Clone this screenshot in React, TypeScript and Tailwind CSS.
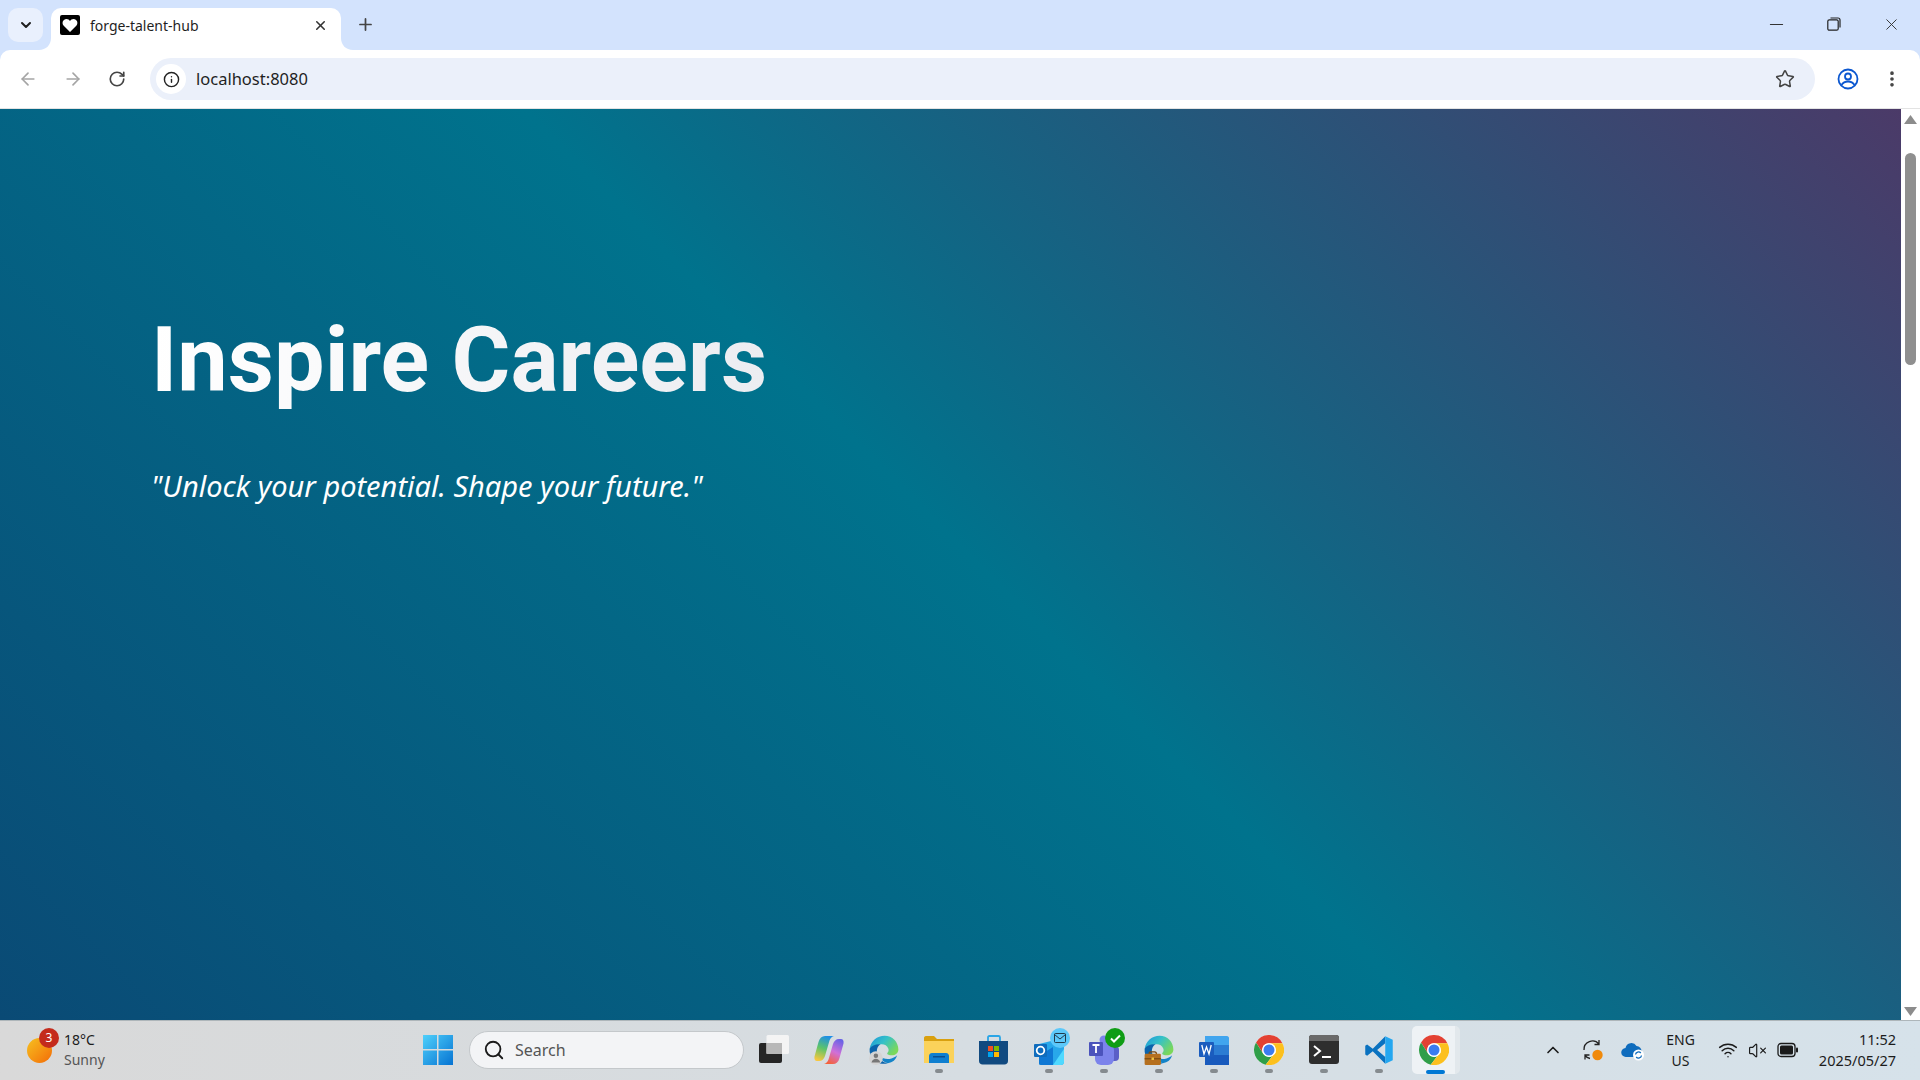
import React from 'react';
import { ArrowLeft, ArrowRight, ChevronDown, ChevronUp, Info, Minus, MoreVertical, Plus, RotateCw, Search, Star, VolumeX, Wifi, X } from 'lucide-react';

const SEGOE = "font-['Noto_Sans',sans-serif]";

const WindowsLogo = () => (
  <svg width="30" height="30" viewBox="0 0 30 30">
    <defs>
      <linearGradient id="win" x1="0" y1="0" x2="1" y2="1">
        <stop offset="0" stopColor="#4fd0fb" />
        <stop offset="1" stopColor="#0673d2" />
      </linearGradient>
    </defs>
    <path d="M0 0h14v14H0zM15.500 0H30v14H15.500zM0 15.500h14V30H0zM15.500 15.500H30V30H15.500z" fill="url(#win)" />
  </svg>
);

const TaskView = () => (
  <svg width="30" height="30" viewBox="0 0 30 30">
    <rect x="0" y="8" width="23" height="20" rx="2" fill="#252525" />
    <rect x="7.500" y="0" width="22.500" height="19" rx="1.500" fill="#f4f4f4" />
    <rect x="7.500" y="8" width="15.500" height="11" fill="#b8b8b8" />
  </svg>
);

const Copilot = () => (
  <svg width="30" height="30" viewBox="0 0 30 30">
    <defs>
      <linearGradient id="copA" x1="0.600" y1="0" x2="0.300" y2="1">
        <stop offset="0" stopColor="#1e8fe6" />
        <stop offset="0.500" stopColor="#5cc46a" />
        <stop offset="1" stopColor="#f7c73f" />
      </linearGradient>
      <linearGradient id="copB" x1="0.700" y1="0" x2="0.300" y2="1">
        <stop offset="0" stopColor="#6a63e6" />
        <stop offset="0.500" stopColor="#d070d8" />
        <stop offset="1" stopColor="#f4623a" />
      </linearGradient>
    </defs>
    <path d="M11 1h9c-2 .5-3.500 2-4.500 4.500L11 21c-1 3-3 5-6 5H3C1 26 0 24 .5 21.500L4.500 7C5.500 3 8 1 11 1z" fill="url(#copA)" />
    <path d="M19 29h-9c2-.5 3.500-2 4.500-4.500L19 9c1-3 3-5 6-5h2c2 0 3 2 2.500 4.500L25.500 23c-1 4-3.500 6-6.500 6z" fill="url(#copB)" />
  </svg>
);

const Edge = ({ badge }: { badge?: 'user' | 'work' }) => (
  <svg width="30" height="30" viewBox="0 0 24 24">
    <defs>
      <linearGradient id="edgeTop" x1="0" y1="0" x2="1" y2="0.600">
        <stop offset="0" stopColor="#1a93dc" />
        <stop offset="0.500" stopColor="#35c1c8" />
        <stop offset="1" stopColor="#7bd85a" />
      </linearGradient>
    </defs>
    <path d="M.5 11C1.500 4.500 6.500.5 12.500.5 18.700.5 23.500 5.500 23.500 11.500c0 3-2.500 4.700-5.300 4.700-2 0-3.700-.6-3.700-1.700 1-1 1.500-2 1-3.500-1-3-4-4-6.500-3.500C5 8 1.700 9.500.5 11z" fill="url(#edgeTop)" />
    <path d="M.5 11c1.500-2.500 5-3.800 8.500-3.500-2.500 1.500-3 4.500-2.500 7 1 4.500 4.500 7.500 8.500 8-1.200.5-2.500.5-3.500.5C5 23.500 0 18 .5 11z" fill="#0b63ab" />
    <path d="M15 22.500c-3-.5-5.500-2.500-6.500-5.500 2.500 2 6 2.800 9.500 1.800 2-.6 3.500-1.600 4.500-2.600-1 3.500-3.500 6-7.500 6.300z" fill="#1484c8" />
    {badge === 'user' && (
      <g>
        <circle cx="5.500" cy="18.500" r="5.500" fill="#d4d4d4" />
        <circle cx="5.500" cy="16.500" r="1.800" fill="#777" />
        <path d="M2 22c.5-2 2-3 3.500-3s3 1 3.500 3z" fill="#777" />
      </g>
    )}
    {badge === 'work' && (
      <g>
        <path d="M4 15.500c0-1.500.7-2 1.500-2h3c.8 0 1.500.5 1.500 2" fill="none" stroke="#7a4a12" strokeWidth="1" />
        <rect x="0.500" y="15" width="13" height="9" rx="1" fill="#b5701f" />
        <rect x="0.500" y="18.500" width="13" height="1" fill="#7a4a12" />
        <rect x="6" y="18" width="2" height="2" fill="#f0c040" />
      </g>
    )}
  </svg>
);

const Explorer = () => (
  <svg width="30" height="30" viewBox="0 0 30 30">
    <path d="M0 3c0-1 .6-2 2-2h8l3 3h17v4H0z" fill="#d9a00f" />
    <path d="M0 6h30v22H0z" fill="#fbd25a" />
    <path d="M5 28v-7c0-1.500 1-3 3-3h14c2 0 3 1.500 3 3v7z" fill="#0f7fd0" />
    <rect x="9" y="21" width="12" height="1.500" fill="#0a4f8f" />
  </svg>
);

const Store = () => (
  <svg width="30" height="30" viewBox="0 0 30 30">
    <path d="M9 6V2.500C9 1.500 9.500 1 10.500 1h9c1 0 1.500.5 1.500 1.500V6" fill="none" stroke="#2aa5e6" strokeWidth="1.800" />
    <path d="M0 6h29v20c0 2-1.500 3.500-3.500 3.500h-22C1.500 29.500 0 28 0 26z" fill="#114a80" />
    <rect x="9" y="11" width="5" height="5" fill="#f25022" />
    <rect x="15" y="11" width="5" height="5" fill="#7fba00" />
    <rect x="9" y="17" width="5" height="5" fill="#00a4ef" />
    <rect x="15" y="17" width="5" height="5" fill="#ffb900" />
  </svg>
);

const Outlook = () => (
  <svg width="30" height="30" viewBox="0 0 30 30">
    <path d="M5 9l20-5 5 8v15c0 1.500-1 3-3 3H7c-1.500 0-2-1-2-2z" fill="#28a8ea" />
    <path d="M19 30h8c2 0 3-1.500 3-3V14z" fill="#50d9ff" />
    <path d="M5 21l14-9v18H7c-1.500 0-2-1-2-2z" fill="#0f78d4" />
    <rect x="0" y="9" width="13" height="13" rx="1" fill="#0f6cbd" />
    <circle cx="6.500" cy="15.500" r="3.800" fill="none" stroke="#fff" strokeWidth="1.800" />
  </svg>
);

const Teams = () => (
  <svg width="30" height="30" viewBox="0 0 30 30">
    <rect x="17" y="11" width="13" height="15" rx="4" fill="#5b5fc7" />
    <rect x="6" y="9" width="19" height="21" rx="6" fill="#7b83eb" />
    <circle cx="15" cy="5" r="4.500" fill="#7b83eb" />
    <rect x="0" y="7" width="14" height="14" rx="1" fill="#4b53bc" />
    <path d="M3.500 10h7M7 10v8" stroke="#fff" strokeWidth="1.800" fill="none" />
  </svg>
);

const Word = () => (
  <svg width="30" height="30" viewBox="0 0 30 30">
    <path d="M6 1h22c1 0 2 1 2 2v7H6z" fill="#41a5ee" />
    <rect x="6" y="10" width="24" height="10" fill="#2b7cd3" />
    <rect x="6" y="20" width="24" height="10" fill="#185abd" />
    <rect x="0" y="7" width="15" height="15" rx="1" fill="#1a5cbe" />
    <path d="M2.800 10l2.200 9 2.500-7 2.500 7 2.200-9" stroke="#fff" strokeWidth="1.300" fill="none" />
  </svg>
);

const Chrome = () => (
  <svg width="30" height="30" viewBox="0 0 24 24">
    <circle cx="12" cy="12" r="12" fill="#fff" />
    <path d="M21.800 7A11 11 0 0 0 2.470 6.500L7.670 14.500A5 5 0 0 1 12 7Z" fill="#e34133" transform="translate(-1.090 -1.090) scale(1.091)" />
    <path d="M2.470 6.500A11 11 0 0 0 9.600 22.730L14.500 16.330A5 5 0 0 1 7.670 14.500Z" fill="#2f9e48" transform="translate(-1.090 -1.090) scale(1.091)" />
    <path d="M9.600 22.730A11 11 0 0 0 21.800 7L12 7A5 5 0 0 1 14.500 16.330Z" fill="#fcc01e" transform="translate(-1.090 -1.090) scale(1.091)" />
    <circle cx="12" cy="12" r="5.500" fill="#fff" />
    <circle cx="12" cy="12" r="4.400" fill="#3b7cf0" />
  </svg>
);

const Terminal = () => (
  <svg width="30" height="30" viewBox="0 0 30 30">
    <rect x="0" y="0" width="30" height="29" rx="3" fill="#2e2e2e" />
    <path d="M0 3c0-2 1-3 3-3h24c2 0 3 1 3 3v3H0z" fill="#6a6a6a" />
    <path d="M5 11l6 5-6 5" stroke="#fff" strokeWidth="2" fill="none" />
    <rect x="13" y="21" width="9" height="2" fill="#fff" />
  </svg>
);

const VsCode = () => (
  <svg width="30" height="30" viewBox="0 0 24 24">
    <path d="M17 1L7 11 2.500 7.500 1 8.500v7l1.500 1L7 13l10 10v-5.500L10.500 12 17 6.500z" fill="#0a72c0" />
    <path d="M17 1l6 2.800v16.400L17 23z" fill="#24a7f0" />
  </svg>
);

const SyncTray = () => (
  <svg width="24" height="24" viewBox="0 0 24 24" fill="none" stroke="#222" strokeWidth="1.300">
    <path d="M3 12a8.500 8.500 0 0 1 15-6M18 2v4.500h-4.500" />
    <path d="M9 20.500A8.500 8.500 0 0 1 4 17.500M4 21.500v-4.500h4.500" />
    <circle cx="16.500" cy="17" r="5.200" fill="#f08a0c" stroke="none" />
  </svg>
);

const OneDrive = () => (
  <svg width="24" height="24" viewBox="0 0 24 24">
    <path d="M5 19a4.500 4.500 0 0 1-.5-9 6 6 0 0 1 11-2 5 5 0 0 1 5 5.500V19z" fill="#0f6cbd" />
    <circle cx="17.500" cy="17" r="5.500" fill="#fff" />
    <path d="M14.500 16.500a3 3 0 0 1 5.300-1.500M20.500 17.500a3 3 0 0 1-5.300 1.500" stroke="#0f6cbd" strokeWidth="1.300" fill="none" />
  </svg>
);

const Battery = () => (
  <svg width="22" height="16" viewBox="0 0 22 16">
    <rect x="1" y="1.500" width="17" height="13" rx="3" fill="none" stroke="#1a1a1a" strokeWidth="1.300" />
    <rect x="3" y="3.500" width="13" height="9" rx="1.500" fill="#1a1a1a" />
    <rect x="19" y="5.500" width="2" height="5" rx="1" fill="#1a1a1a" />
  </svg>
);

const Triangle = ({ down }: { down?: boolean }) => (
  <svg width="13" height="9" viewBox="0 0 13 9">
    <path d={down ? 'M0 0h13L6.500 9z' : 'M6.500 0L13 9H0z'} fill="#8c8c8c" />
  </svg>
);

const taskIcons = [
  { icon: <TaskView /> },
  { icon: <Copilot /> },
  { icon: <Edge badge="user" /> },
  { icon: <Explorer />, running: true },
  { icon: <Store /> },
  { icon: <Outlook />, running: true, mail: true },
  { icon: <Teams />, running: true, check: true },
  { icon: <Edge badge="work" />, running: true },
  { icon: <Word />, running: true },
  { icon: <Chrome />, running: true },
  { icon: <Terminal />, running: true },
  { icon: <VsCode />, running: true },
];

const TaskButton = ({ item }: { item: (typeof taskIcons)[number] }) => (
  <div className="relative w-[30px] h-[30px]">
    {item.icon}
    {item.running && <div className="absolute left-[11px] top-[34px] w-2 h-1 rounded-full bg-[#858b8f]" />}
    {item.mail && (
      <div className="absolute left-[16px] top-[-7px] w-5 h-5 rounded-full bg-[#5cc8fa] flex items-center justify-center">
        <svg width="12" height="10" viewBox="0 0 12 10" fill="none" stroke="#1a2a3a" strokeWidth="0.900">
          <rect x="0.500" y="0.500" width="11" height="9" rx="1" />
          <path d="M0.500 1.500L6 6l5.500-4.500" />
        </svg>
      </div>
    )}
    {item.check && (
      <div className="absolute left-[16px] top-[-7px] w-5 h-5 rounded-full bg-[#0f9d15] flex items-center justify-center">
        <svg width="11" height="9" viewBox="0 0 11 9" fill="none" stroke="#fff" strokeWidth="2">
          <path d="M1 4.500l3 3 6-6" />
        </svg>
      </div>
    )}
  </div>
);

const BrowserChrome = () => (
  <>
    <div className="h-[50px] bg-[#d3e3fd] flex items-start relative">
      <div className="ml-2 mt-2 w-[35px] h-[34px] rounded-[10px] bg-[#e9f0fd] flex items-center justify-center">
        <ChevronDown size={16} strokeWidth={3} className="text-[#1f1f1f]" />
      </div>
      <div className="relative ml-2 mt-2 w-[290px] h-[42px] bg-white rounded-t-[10px] flex items-center pl-[9px] pb-[8px] pr-[13px]">
        <svg width="20" height="20" viewBox="0 0 20 20" className="mr-[10px]">
          <rect width="20" height="20" rx="2" fill="#000" />
          <path d="M10 17L3.500 10.500C1.500 8 3 4 6.500 4 8 4 9.300 4.800 10 6c.7-1.200 2-2 3.500-2C17 4 18.500 8 16.500 10.500z" fill="#fff" />
        </svg>
        <span className={`${SEGOE} text-[14px] text-[#1f1f1f] flex-1`}>forge-talent-hub</span>
        <X size={15} strokeWidth={2.500} className="text-[#333]" />
        <svg width="12" height="12" viewBox="0 0 12 12" className="absolute left-[-12px] bottom-0">
          <path d="M12 0v12H0C7 12 12 7 12 0z" fill="#fff" />
        </svg>
        <svg width="12" height="12" viewBox="0 0 12 12" className="absolute right-[-12px] bottom-0">
          <path d="M0 0v12h12C5 12 0 7 0 0z" fill="#fff" />
        </svg>
      </div>
      <Plus size={19} strokeWidth={2.200} className="ml-[15px] mt-[15px] text-[#444]" />
      <div className="ml-auto flex items-center h-[48px] text-[#333]">
        <Minus size={21} strokeWidth={1.200} className="mr-[40px]" />
        <svg width="14" height="14" viewBox="0 0 14 14" fill="none" stroke="#222" strokeWidth="1.200" className="mr-[41px]">
          <rect x="0.800" y="2.800" width="10.400" height="10.400" rx="1.500" />
          <path d="M3.500 1h7.500c1.200 0 2 .8 2 2v7.500" />
        </svg>
        <X size={19} strokeWidth={1.200} className="mr-[19px]" />
      </div>
    </div>
    <div className="h-[58px] bg-white rounded-t-[10px] flex items-center pl-[18px] border-b border-b-[#e3e3e3] box-content">
      <ArrowLeft size={20} strokeWidth={2} className="text-[#a5a5a5] mr-[25px]" />
      <ArrowRight size={20} strokeWidth={2} className="text-[#a5a5a5] mr-[25px]" />
      <RotateCw size={18} strokeWidth={2.200} className="text-[#444] mr-[24px]" />
      <div className="flex-1 h-[42px] rounded-full bg-[#ebf0fa] flex items-center pl-[6px] pr-[20px]">
        <div className="w-[30px] h-[30px] rounded-full bg-white flex items-center justify-center mr-[10px]">
          <Info size={17} strokeWidth={2} className="text-[#222]" />
        </div>
        <span className={`${SEGOE} text-[16.500px] text-[#1f1f1f] flex-1`}>localhost:8080</span>
        <Star size={20} strokeWidth={1.800} className="text-[#444]" />
      </div>
      <svg width="22" height="22" viewBox="0 0 22 22" fill="none" stroke="#0b57d0" strokeWidth="1.800" className="ml-[22px] mr-[23px]">
        <circle cx="11" cy="11" r="9.500" />
        <circle cx="11" cy="8.500" r="3" />
        <path d="M4.500 17c1.500-2.500 4-3.500 6.500-3.500s5 1 6.500 3.500" />
      </svg>
      <MoreVertical size={20} strokeWidth={2.400} className="text-[#444] mr-[18px]" />
    </div>
  </>
);

const Taskbar = () => (
  <div className={`${SEGOE} h-[60px] shrink-0 pb-px border-t border-t-[#aeb6ba] bg-linear-to-r from-[#d9d9d9] via-[#d6dde2] to-[#d6e2ea] flex items-center text-[#1c1c1c]`}>
    <div className="w-[423px] pl-[27px] flex items-center">
      <div className="relative w-[25px] h-[25px] mt-[1px] rounded-full bg-linear-to-br from-[#f4c020] to-[#f26a06]">
        <div className="absolute left-[12px] top-[-10px] w-[20px] h-[20px] rounded-full bg-[#c42b1c] text-white text-[12px] flex items-center justify-center">3</div>
      </div>
      <div className="ml-[12px] flex flex-col text-[14px] leading-[20px]">
        <span>18°C</span>
        <span className="text-[#555]">Sunny</span>
      </div>
    </div>
    <WindowsLogo />
    <div className="ml-[16px] w-[275px] h-[38px] rounded-full bg-[#f3f4f6] border border-[#c4c8cb] flex items-center pl-[13px]">
      <Search size={22} strokeWidth={2} className="text-[#1a1a1a]" />
      <span className="ml-[10px] text-[16px] text-[#555]">Search</span>
    </div>
    <div className="ml-[15px] flex items-center gap-[25px]">
      {taskIcons.map((item, i) => (
        <TaskButton key={i} item={item} />
      ))}
      <div className="relative w-[43px] h-[48px] -ml-[7px] rounded-[5px] bg-[#eef2f5] border-r-[5px] border-r-[#e2e8ec] flex items-center justify-center box-content">
        <Chrome />
        <div className="absolute left-[14px] bottom-0 w-[19px] h-1 rounded-full bg-[#0078d4]" />
      </div>
    </div>
    <div className="ml-auto flex items-center pr-[24px]">
      <ChevronUp size={20} strokeWidth={2} className="mr-[18px]" />
      <SyncTray />
      <div className="ml-[16px]"><OneDrive /></div>
      <div className="ml-[21px] flex flex-col items-center text-[14px] leading-[21px]">
        <span>ENG</span>
        <span>US</span>
      </div>
      <Wifi size={20} strokeWidth={1.800} className="ml-[23px]" />
      <VolumeX size={19} strokeWidth={1.500} className="ml-[10px]" />
      <div className="ml-[10px]"><Battery /></div>
      <div className="ml-[20px] flex flex-col items-end text-[14.500px] leading-[21px]">
        <span>11:52</span>
        <span>2025/05/27</span>
      </div>
    </div>
  </div>
);

const App: React.FC = () => {
  return (
    <div className="w-screen h-screen overflow-hidden flex flex-col bg-[#d3e3fd]">
      <BrowserChrome />
      <div className="flex-1 min-h-0 flex">
        {/* Hero */}
        <div className="flex-1 pl-[151px] pt-[192px] bg-[linear-gradient(45deg,#0a4a75_0%,#00738d_51%,#4b3a68_100%)]">
          <h1 className="font-['Roboto',sans-serif] font-bold text-[90px] leading-[120px] text-transparent bg-clip-text bg-linear-to-r from-white to-[#ecedf1] w-fit">
            Inspire Careers
          </h1>
          <p className={`${SEGOE} italic font-normal text-[29px] leading-[40px] mt-[45px] text-white`}>
            "Unlock your potential. Shape your future."
          </p>
        </div>
        {/* Scrollbar */}
        <div className="w-[19px] bg-white flex flex-col items-center pt-[6px] pb-[4px]">
          <Triangle />
          <div className="w-[11px] h-[212px] mt-[29px] rounded-full bg-[#8f8f8f]" />
          <div className="mt-auto">
            <Triangle down />
          </div>
        </div>
      </div>
      <Taskbar />
    </div>
  );
};

export default App;
